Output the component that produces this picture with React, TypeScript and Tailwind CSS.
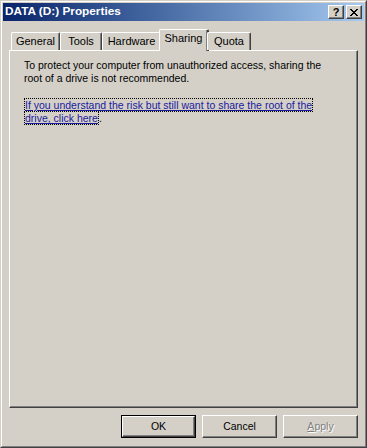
import React from "react";

const FONT = { fontFamily: '"Liberation Sans", Arial, sans-serif' };

const TABS = [
  { label: "General", w: "w-[49px]" },
  { label: "Tools", w: "w-[42px]" },
  { label: "Hardware", w: "w-[59px]" },
  { label: "Sharing", w: "w-[50px]", active: true },
  { label: "Quota", w: "w-[44px]" },
];

function CaptionButton({ children }: { children: React.ReactNode }) {
  return (
    <div className="w-[16px] h-[14px] bg-[#d4d0c8] border border-t-white border-l-white border-r-[#404040] border-b-[#404040] shadow-[inset_-1px_-1px_#808080] flex items-center justify-center">
      {children}
    </div>
  );
}

function Button({ label, isDefault, disabled }: { label: React.ReactNode; isDefault?: boolean; disabled?: boolean }) {
  const inner = (
    <div className="w-full h-full bg-[#d4d0c8] border border-t-white border-l-white border-r-[#404040] border-b-[#404040] shadow-[inset_-1px_-1px_#808080] flex items-center justify-center text-[10.5px]">
      {label}
    </div>
  );
  return (
    <div className={isDefault ? "w-[75px] h-[23px] border border-black" : "w-[75px] h-[23px]"}>
      {disabled ? <div className="w-full h-full text-[#808080] [text-shadow:1px_1px_#ffffff]">{inner}</div> : inner}
    </div>
  );
}

export default function App() {
  return (
    <div style={FONT} className="w-[367px] h-[448px] bg-[#d4d0c8] border border-t-[#d4d0c8] border-l-[#d4d0c8] border-r-[#404040] border-b-[#404040] text-black">
      <div className="h-full border border-t-white border-l-white border-r-[#808080] border-b-[#808080] p-px flex flex-col">
        {/* Title bar */}
        <div className="h-[18px] bg-gradient-to-r from-[#0a246a] to-[#a6caf0] flex items-center pl-[2px] pr-[2px]">
          <span className="text-white font-bold text-[11.8px] leading-none flex-1">DATA (D:) Properties</span>
          <div className="flex gap-[2px]">
            <CaptionButton>
              <span className="font-bold text-[11px] leading-none mt-[1px]">?</span>
            </CaptionButton>
            <CaptionButton>
              <svg width="8" height="7" viewBox="0 0 8 7" shapeRendering="crispEdges">
                <path d="M0 0h2v1h-2zM6 0h2v1h-2zM1 1h2v1h-2zM5 1h2v1h-2zM2 2h4v1h-4zM3 3h2v1h-2zM2 4h4v1h-4zM1 5h2v1h-2zM5 5h2v1h-2zM0 6h2v1h-2zM6 6h2v1h-2z" fill="#000" />
              </svg>
            </CaptionButton>
          </div>
        </div>

        {/* Body */}
        <div className="flex-1 flex flex-col px-[6px] pt-[8px] pb-[7px]">
          {/* Tabs */}
          <div className="flex items-end pl-[2px] relative z-10">
            {TABS.map((t) =>
              t.active ? (
                <div
                  key={t.label}
                  className={`${t.w} h-[22px] -mb-px -mx-[2px] bg-[#d4d0c8] border-t border-l border-t-white border-l-white border-r-2 border-r-[#404040] shadow-[inset_-1px_0_#808080] rounded-tl-[2px] rounded-tr-[2px] flex justify-center pt-[2px] text-[11px] leading-[13px]`}
                >
                  {t.label}
                </div>
              ) : (
                <div
                  key={t.label}
                  className={`${t.w} h-[18px] bg-[#d4d0c8] border-t border-l border-t-white border-l-white border-r border-r-[#404040] shadow-[inset_-1px_0_#808080] rounded-tl-[2px] rounded-tr-[2px] flex justify-center pt-[2px] text-[11px] leading-[13px]`}
                >
                  {t.label}
                </div>
              )
            )}
          </div>

          {/* Panel */}
          <div className="flex-1 border border-t-white border-l-white border-r-[#404040] border-b-[#404040] shadow-[inset_-1px_-1px_#808080] pt-[8px] pl-[14px] text-[10.5px] leading-[13px]">
            <p className="whitespace-nowrap">
              To protect your computer from unauthorized access, sharing the
              <br />
              root of a drive is not recommended.
            </p>
            <p className="mt-[14px] whitespace-nowrap text-[#1a1a9e]">
              <span className="underline border border-dotted border-black box-decoration-clone">
                If you understand the risk but still want to share the root of the
              </span>
              <br />
              <span className="underline border border-dotted border-black box-decoration-clone">drive, click here</span>
              <span className="text-black">.</span>
            </p>
          </div>

          {/* Buttons */}
          <div className="flex justify-end gap-[6px] mt-[7px]">
            <Button label="OK" isDefault />
            <Button label="Cancel" />
            <Button
              label={
                <span>
                  <span className="underline">A</span>pply
                </span>
              }
              disabled
            />
          </div>
        </div>
      </div>
    </div>
  );
}
